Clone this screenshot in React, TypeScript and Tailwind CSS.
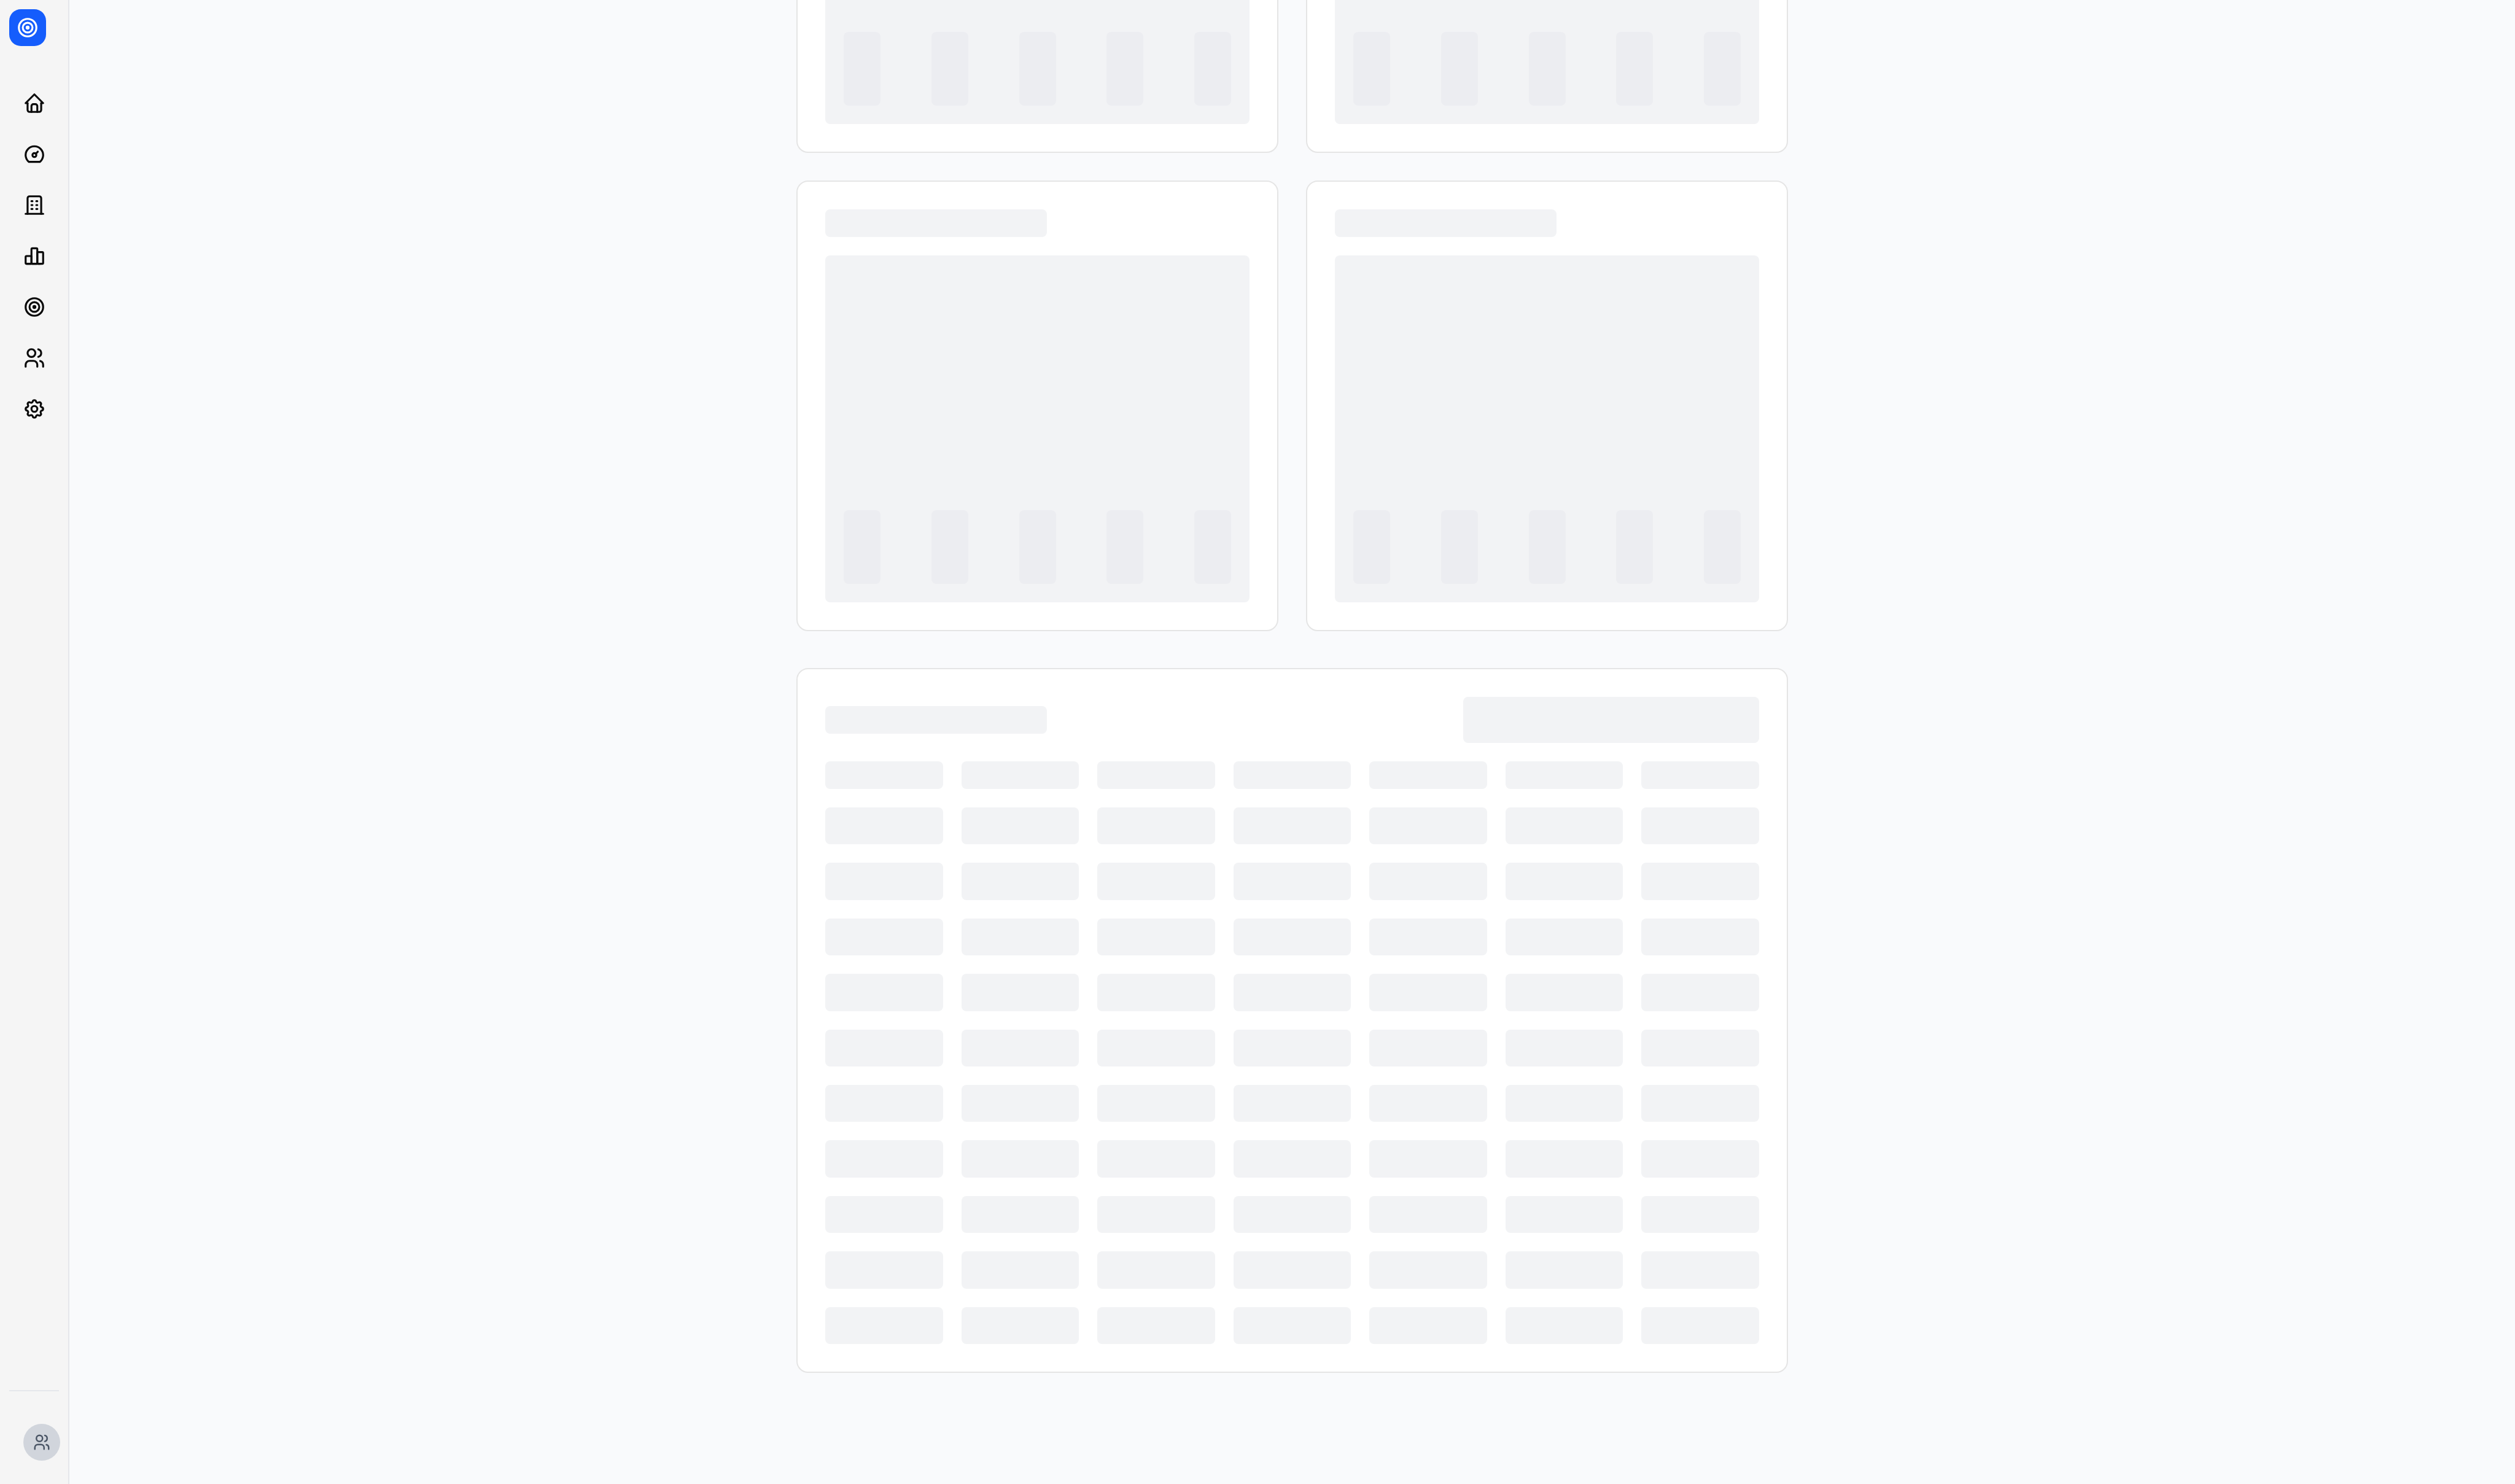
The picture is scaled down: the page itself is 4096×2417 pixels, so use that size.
import React from "react";
import type { IconType } from "react-icons";
import {
  TbBuilding,
  TbChartBar,
  TbDashboard,
  TbHome,
  TbSettings,
  TbTarget,
  TbUsers,
} from "react-icons/tb";

const navItems: { label: string; Icon: IconType }[] = [
  { label: "Home", Icon: TbHome },
  { label: "Dashboard", Icon: TbDashboard },
  { label: "Companies", Icon: TbBuilding },
  { label: "Reports", Icon: TbChartBar },
  { label: "Goals", Icon: TbTarget },
  { label: "Team", Icon: TbUsers },
  { label: "Settings", Icon: TbSettings },
];

const times = (n: number) => Array.from({ length: n }, (_, i) => i);

function Sidebar() {
  return (
    <aside className="flex w-[113px] shrink-0 flex-col border-r-2 border-gray-200 bg-neutral-100">
      <div className="p-[15px]">
        <a
          href="#"
          aria-label="Overview"
          className="flex size-[60px] items-center justify-center rounded-[19px] bg-[#155dfc] text-white"
        >
          <TbTarget className="size-[38px]" />
        </a>
      </div>
      <nav className="mt-[37px] flex h-[580px] flex-col items-center">
        {navItems.map(({ label, Icon }) => (
          <a
            key={label}
            href="#"
            aria-label={label}
            className="flex w-[75px] flex-1 items-center justify-center text-neutral-950"
          >
            <Icon className="size-[38px]" />
          </a>
        ))}
      </nav>
      <div className="mx-[15px] mt-auto border-t-2 border-gray-200" />
      <div className="pt-[53px] pr-[13px] pb-[38px] pl-[38px]">
        <button
          type="button"
          aria-label="Account"
          className="flex size-[60px] items-center justify-center rounded-full bg-gray-300 text-gray-600"
        >
          <TbUsers className="size-[30px]" />
        </button>
      </div>
    </aside>
  );
}

function Card({ children }: { children: React.ReactNode }) {
  return (
    <section className="flex flex-col gap-[30px] rounded-[19px] border-2 border-neutral-200 bg-white p-[45px]">
      {children}
    </section>
  );
}

function ChartSkeleton() {
  return (
    <Card>
      <div className="h-[45px] w-[361px] rounded-lg bg-[#f2f3f5]" />
      <div className="flex h-[565px] items-end justify-between rounded-lg bg-[#f2f3f5] p-[30px]">
        {times(5).map((i) => (
          <div key={i} className="h-[120px] w-[60px] rounded-lg bg-[#ecedf1]" />
        ))}
      </div>
    </Card>
  );
}

function TableSkeleton() {
  return (
    <Card>
      <div className="flex items-center justify-between">
        <div className="h-[45px] w-[361px] rounded-lg bg-[#f2f3f5]" />
        <div className="h-[75px] w-[482px] rounded-lg bg-[#f2f3f5]" />
      </div>
      <div className="grid grid-cols-7 gap-[30px]">
        {times(7).map((i) => (
          <div key={i} className="h-[45px] rounded-lg bg-[#f2f3f5]" />
        ))}
      </div>
      <div className="grid h-[874px] auto-rows-fr grid-cols-7 gap-[30px]">
        {times(70).map((i) => (
          <div key={i} className="rounded-lg bg-[#f2f3f5]" />
        ))}
      </div>
    </Card>
  );
}

export default function App() {
  return (
    <div className="flex h-screen overflow-hidden bg-[#f9fafc]">
      <Sidebar />
      <main className="flex min-w-0 flex-1 flex-col items-center justify-end overflow-hidden pb-[181px]">
        <div className="flex w-full max-w-[1615px] shrink-0 flex-col gap-[60px]">
          <div className="grid grid-cols-2 gap-[45px]">
            {times(4).map((i) => (
              <ChartSkeleton key={i} />
            ))}
          </div>
          <TableSkeleton />
        </div>
      </main>
    </div>
  );
}
